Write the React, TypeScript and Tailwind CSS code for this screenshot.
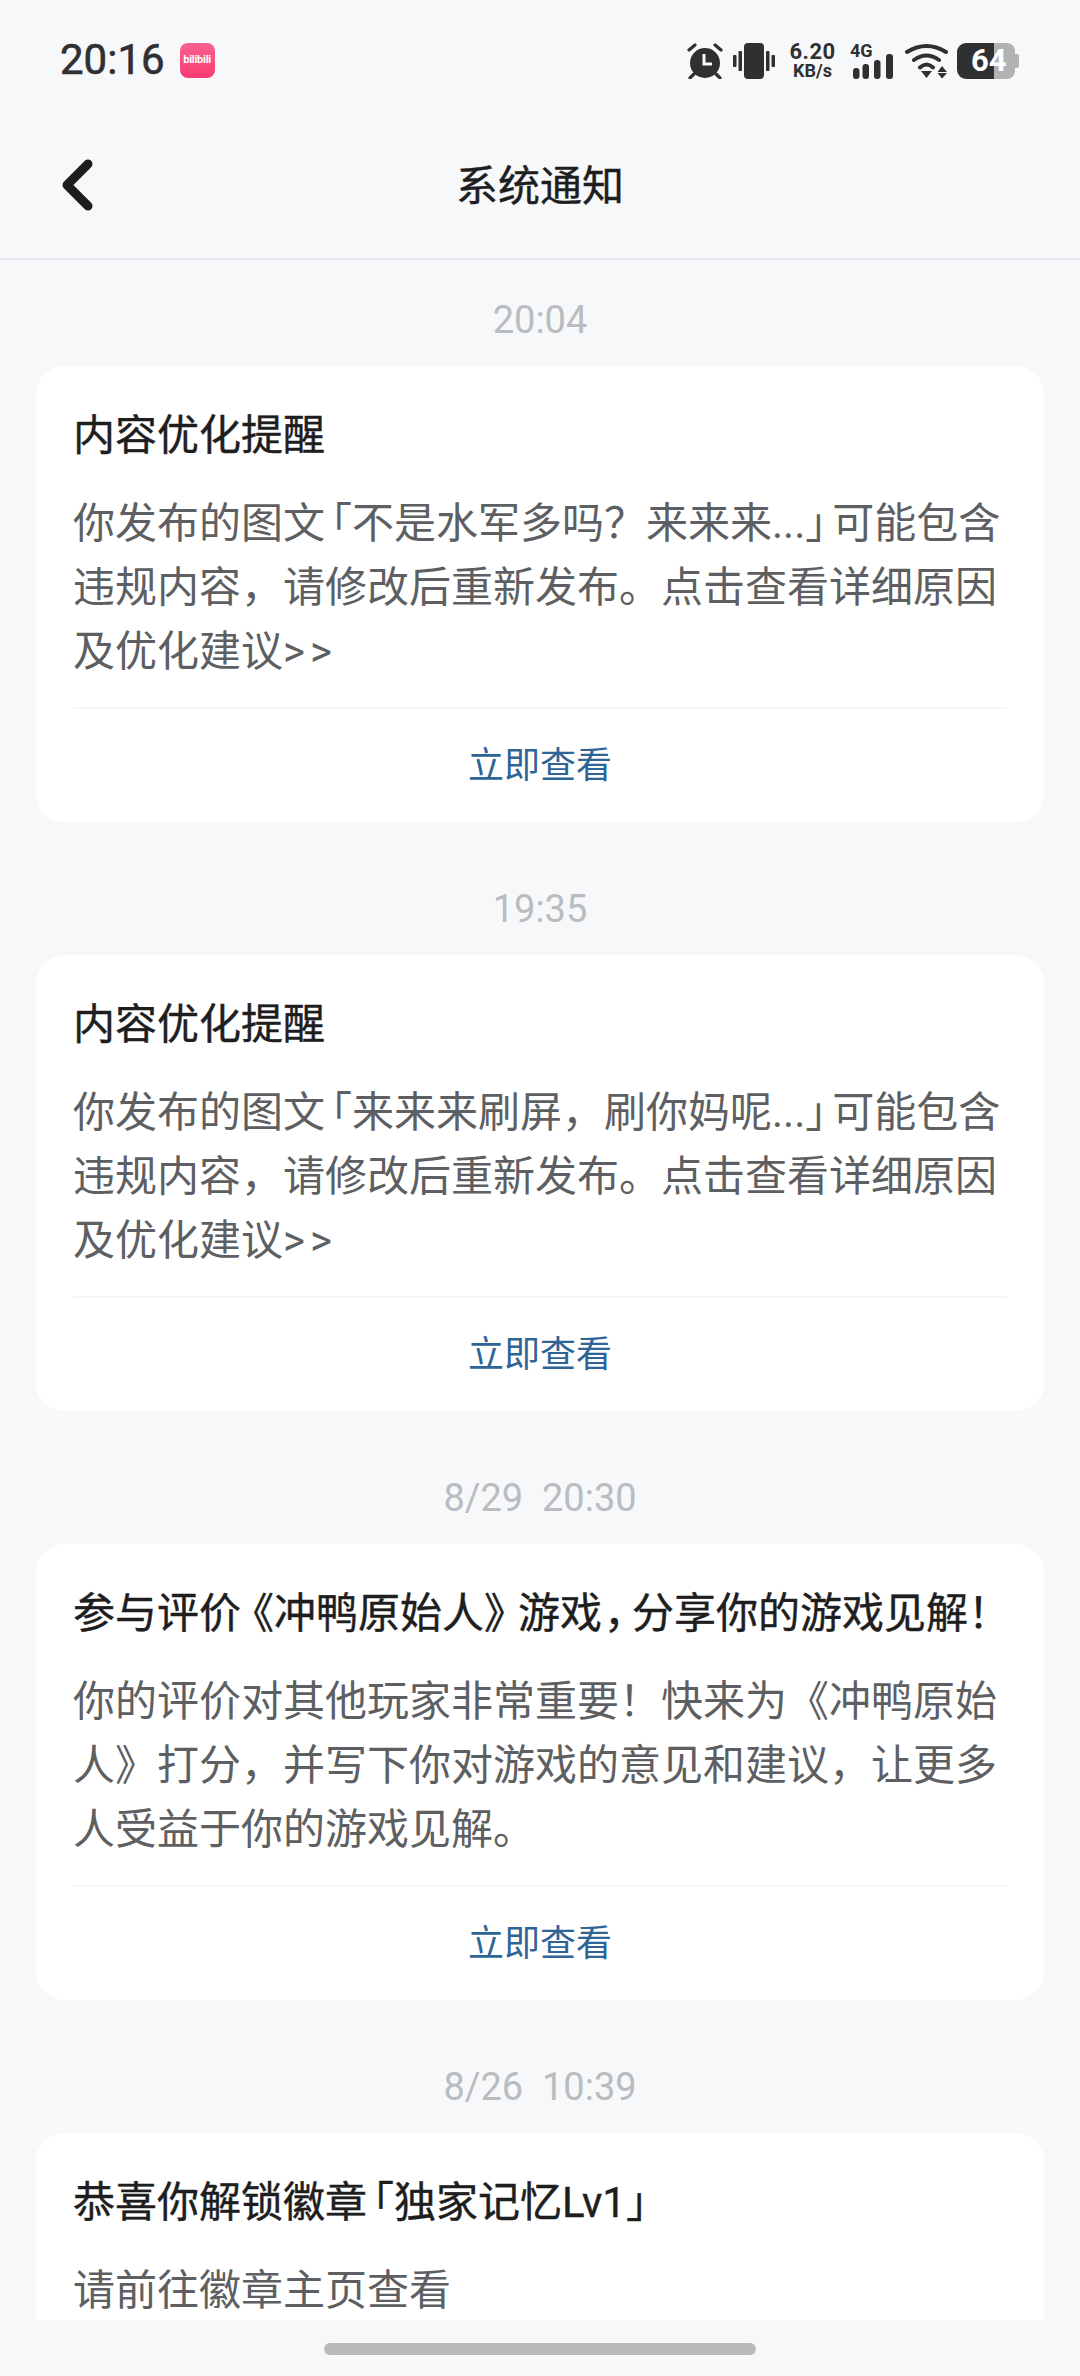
import React from "react";

type Notice = {
  time: string;
  title: React.ReactNode;
  body: React.ReactNode;
};

// the app squeezes these brackets to about 28px, full width is 42px
const Open = ({ children }: { children: React.ReactNode }) => <span className="ml-[-15px]">{children}</span>;
const Close = ({ children }: { children: React.ReactNode }) => <span className="mr-[-15px]">{children}</span>;
const More = () => <span className="tracking-[5px]">&gt;&gt;</span>;

const notices: Notice[] = [
  {
    time: "20:04",
    title: "内容优化提醒",
    body: (
      <>
        你发布的图文<Open>「</Open>不是水军多吗？来来来...<Close>」</Close>可能包含违规内容，请修改后重新发布。点击查看详细原因及优化建议<More />
      </>
    ),
  },
  {
    time: "19:35",
    title: "内容优化提醒",
    body: (
      <>
        你发布的图文<Open>「</Open>来来来刷屏，刷你妈呢...<Close>」</Close>可能包含违规内容，请修改后重新发布。点击查看详细原因及优化建议<More />
      </>
    ),
  },
  {
    time: "8/29  20:30",
    title: (
      <>
        参与评价<span className="ml-[-9px]">《</span>冲鸭原始人<span className="mr-[-8px]">》</span>游戏<span className="ml-[2px] mr-[-14px]">，</span>分享你的游戏见解<span className="mr-[-30px]">！</span>
      </>
    ),
    body: "你的评价对其他玩家非常重要！快来为《冲鸭原始人》打分，并写下你对游戏的意见和建议，让更多人受益于你的游戏见解。",
  },
  {
    time: "8/26  10:39",
    title: (
      <>
        恭喜你解锁徽章<Open>「</Open>独家记忆Lv1<Close>」</Close>
      </>
    ),
    body: "请前往徽章主页查看",
  },
];

const StatusIcons = () => (
  <div className="flex items-center text-[#2f3032]">
    {/* alarm */}
    <svg width="36" height="36" viewBox="0 0 36 36" fill="none">
      <circle cx="18" cy="20" r="15" fill="#2f3032" />
      <path d="M17 11v10h8" stroke="#f6f8fa" strokeWidth="3" />
      <path d="M2 7l6-5M34 7l-6-5M7 31l-4 4M29 31l4 4" stroke="#2f3032" strokeWidth="3.2" strokeLinecap="round" />
    </svg>
    {/* vibrate */}
    <svg className="ml-[10px]" width="42" height="36" viewBox="0 0 42 36" fill="#2f3032">
      <rect x="11" y="0" width="20" height="36" rx="4" />
      <rect x="5.5" y="8" width="3.5" height="20" rx="1" />
      <rect x="33" y="8" width="3.5" height="20" rx="1" />
      <rect x="0" y="12" width="3.5" height="12" rx="1" />
      <rect x="38.5" y="12" width="3.5" height="12" rx="1" />
    </svg>
    {/* net speed */}
    <div className="ml-[15px] flex w-[45px] flex-col items-center font-bold">
      <span className="text-[22px] leading-[20px] tracking-[0.5px]">6.20</span>
      <span className="mt-[1px] text-[18px] leading-[16px]">KB/s</span>
    </div>
    {/* signal */}
    <div className="relative ml-[15px] h-[36px] w-[43px]">
      <span className="absolute left-0 top-0 text-[18px] font-bold leading-[15px]">4G</span>
      <svg width="43" height="36" viewBox="0 0 43 36" fill="#2f3032">
        <rect x="3" y="25" width="6.5" height="11" rx="3" />
        <rect x="12.5" y="21" width="6.5" height="15" rx="3" />
        <rect x="24" y="17" width="6.5" height="19" rx="3" />
        <rect x="36" y="11" width="7" height="25" rx="3" />
      </svg>
    </div>
    {/* wifi */}
    <svg className="ml-[10px]" width="45" height="36" viewBox="0 0 45 36" fill="none">
      <path d="M4 9Q23.500-3 43 9M11 17Q23.500 8 36 17M17 24.500Q23.500 18.500 30 24.500" stroke="#2f3032" strokeWidth="4" strokeLinecap="round" />
      <path d="M18 28h11l-5.500 7zM34.500 29l4.500-6 5 6zM34.500 30h9.500l-5 5.500z" fill="#2f3032" />
    </svg>
    {/* battery */}
    <div className="relative ml-[9px] flex h-[36px] w-[63px] items-center">
      <div className="h-full w-[37px] rounded-l-[9px] bg-[#2f3032]" />
      <div className="h-full w-[21px] rounded-r-[8px] bg-[#b1b2b3]" />
      <div className="h-[14px] w-[4px] rounded-r-[2px] bg-[#b1b2b3]" />
      <span className="absolute left-[14px] top-0 text-[31px] font-bold leading-[36px] text-white">64</span>
    </div>
  </div>
);

const NoticeCard = ({ notice }: { notice: Notice }) => (
  <section>
    <div className="mb-[23px] whitespace-pre text-center text-[38px] leading-[46px] text-[#b9bcc0]">{notice.time}</div>
    <div className="rounded-[28px] bg-white px-[37px] pt-[41px]">
      <h2 className="whitespace-nowrap text-[42px] leading-[58px] text-[#1e1e1f] [-webkit-text-stroke:0.4px_#1e1e1f]">{notice.title}</h2>
      <p className="mt-[27px] text-[42px] leading-[64px] text-[#5e5f62]">{notice.body}</p>
      <div className="mt-[23px] h-[2px] bg-[#f4f5f6]" />
      <div className="flex h-[113px] items-center justify-center text-[36px] text-[#2f6596]">立即查看</div>
    </div>
  </section>
);

export default function App() {
  return (
    <div className="flex h-[2376px] w-[1080px] flex-col overflow-hidden bg-[#f6f8fa] [font-family:Roboto,'Noto_Sans_CJK_SC',sans-serif]">
      <header className="border-b-2 border-[#e4e6e9]">
        <div className="flex h-[113px] items-start justify-between pl-[60px] pr-[60px] pt-[42px]">
          <div className="flex items-center">
            <span className="text-[42px] leading-[36px] text-[#2f3032] [-webkit-text-stroke:0.6px_#2f3032]">20:16</span>
            <div className="ml-[15px] flex h-[35px] w-[35px] items-center justify-center rounded-[8px] bg-linear-to-b from-[#f8608f] to-[#f93a72] text-[11px] font-bold tracking-tight text-white">
              bilibili
            </div>
          </div>
          <StatusIcons />
        </div>
        <nav className="grid h-[145px] grid-cols-[1fr_auto_1fr] items-center px-[60px] pt-[2px]">
          <svg width="36" height="56" viewBox="0 0 36 56" fill="none">
            <path d="M28 5L7 26l21 21" stroke="#1c1d1f" strokeWidth="9" strokeLinecap="round" strokeLinejoin="round" />
          </svg>
          <h1 className="text-[42px] text-[#1e1e1f] [-webkit-text-stroke:0.4px_#1e1e1f]">系统通知</h1>
          <div />
        </nav>
      </header>
      <main className="flex flex-1 flex-col gap-[64px] overflow-hidden px-[36px] pt-[37px]">
        {notices.map((n) => (
          <NoticeCard key={n.time} notice={n} />
        ))}
      </main>
      <footer className="flex h-[56px] justify-center pt-[23px]">
        <div className="h-[12px] w-[432px] rounded-full bg-[#b8b9bb]" />
      </footer>
    </div>
  );
}
